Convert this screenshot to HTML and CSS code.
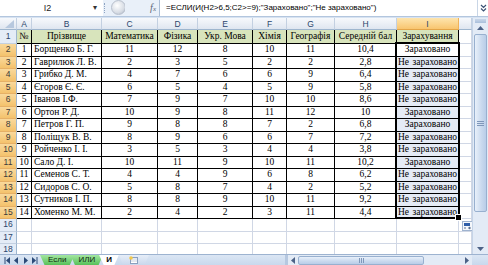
FILE: index.html
```html
<!DOCTYPE html>
<html>
    <head>
        <title>Зарахування</title>
        <meta charset="utf-8">
        <link rel="stylesheet" href="styles.css">
    </head>
    <body>
        <div class="formula_bar">
            <div class="name_box"><span class="name">I2</span><span class="drop">&#9662;</span></div>
            <div class="grip"></div>
            <div class="circle_box"><div class="circle"></div></div>
            <div class="fx"><i>f</i><span>x</span></div>
            <div class="formula">=ЕСЛИ(И(H2&gt;6,5;C2&gt;=9);"Зараховано";"Не зараховано")</div>
            <div class="expand">
                <svg width="7" height="8" viewBox="0 0 7 8"><path d="M1 1l2.5 2.5L6 1M1 4.5l2.5 2.5L6 4.5" fill="none" stroke="#3b5275" stroke-width="1.2"/></svg>
            </div>
        </div>

        <div class="workspace">
            <div class="sheet">
                <table class="grid">
                    <tr class="col_heads">
                        <th class="corner"><svg width="17" height="11" viewBox="0 0 17 11"><path d="M14 2v8H5z" fill="#b7c8de"/></svg></th>
                        <th class="ca">A</th>
                        <th class="cb">B</th>
                        <th class="cc">C</th>
                        <th class="cd">D</th>
                        <th class="ce">E</th>
                        <th class="cf">F</th>
                        <th class="cg">G</th>
                        <th class="ch">H</th>
                        <th class="ci sel">I</th>
                        <th class="cj"></th>
                    </tr>
                    <tr class="head">
                        <th class="rh">1</th>
                        <td>№</td><td>Прізвище</td><td>Математика</td><td>Фізика</td><td>Укр. Мова</td><td>Хімія</td><td>Географія</td><td>Середній бал</td><td>Зарахування</td>
                        <td class="e"></td>
                    </tr>
                    <tr class="data">
                        <th class="rh sel">2</th>
                        <td>1</td><td class="nm">Борщенко Б. Г.</td><td>11</td><td>12</td><td>8</td><td>10</td><td>11</td><td>10,4</td>
                        <td class="res active">Зараховано</td><td class="e"></td>
                    </tr>
                    <tr class="data">
                        <th class="rh sel">3</th>
                        <td>2</td><td class="nm">Гаврилюк Л. В.</td><td>2</td><td>3</td><td>5</td><td>2</td><td>2</td><td>2,8</td>
                        <td class="res"><span class="no"><span>Не</span><span>зараховано</span></span></td><td class="e"></td>
                    </tr>
                    <tr class="data">
                        <th class="rh sel">4</th>
                        <td>3</td><td class="nm">Грибко Д. М.</td><td>4</td><td>7</td><td>6</td><td>6</td><td>9</td><td>6,4</td>
                        <td class="res"><span class="no"><span>Не</span><span>зараховано</span></span></td><td class="e"></td>
                    </tr>
                    <tr class="data">
                        <th class="rh sel">5</th>
                        <td>4</td><td class="nm">Єгоров Є. Є.</td><td>6</td><td>5</td><td>4</td><td>5</td><td>9</td><td>5,8</td>
                        <td class="res"><span class="no"><span>Не</span><span>зараховано</span></span></td><td class="e"></td>
                    </tr>
                    <tr class="data">
                        <th class="rh sel">6</th>
                        <td>5</td><td class="nm">Іванов І.Ф.</td><td>7</td><td>9</td><td>7</td><td>10</td><td>10</td><td>8,6</td>
                        <td class="res"><span class="no"><span>Не</span><span>зараховано</span></span></td><td class="e"></td>
                    </tr>
                    <tr class="data">
                        <th class="rh sel">7</th>
                        <td>6</td><td class="nm">Ортон Р. Д.</td><td>10</td><td>9</td><td>8</td><td>11</td><td>12</td><td>10</td>
                        <td class="res">Зараховано</td><td class="e"></td>
                    </tr>
                    <tr class="data">
                        <th class="rh sel">8</th>
                        <td>7</td><td class="nm">Петров Г. П.</td><td>9</td><td>8</td><td>8</td><td>7</td><td>2</td><td>6,8</td>
                        <td class="res">Зараховано</td><td class="e"></td>
                    </tr>
                    <tr class="data">
                        <th class="rh sel">9</th>
                        <td>8</td><td class="nm">Поліщук В. В.</td><td>8</td><td>9</td><td>6</td><td>6</td><td>7</td><td>7,2</td>
                        <td class="res"><span class="no"><span>Не</span><span>зараховано</span></span></td><td class="e"></td>
                    </tr>
                    <tr class="data">
                        <th class="rh sel">10</th>
                        <td>9</td><td class="nm">Ройченко І. І.</td><td>3</td><td>5</td><td>3</td><td>4</td><td>4</td><td>3,8</td>
                        <td class="res"><span class="no"><span>Не</span><span>зараховано</span></span></td><td class="e"></td>
                    </tr>
                    <tr class="data">
                        <th class="rh sel">11</th>
                        <td>10</td><td class="nm">Сало Д. І.</td><td>10</td><td>11</td><td>9</td><td>10</td><td>11</td><td>10,2</td>
                        <td class="res">Зараховано</td><td class="e"></td>
                    </tr>
                    <tr class="data">
                        <th class="rh sel">12</th>
                        <td>11</td><td class="nm">Семенов С. Т.</td><td>4</td><td>4</td><td>9</td><td>6</td><td>8</td><td>6,2</td>
                        <td class="res"><span class="no"><span>Не</span><span>зараховано</span></span></td><td class="e"></td>
                    </tr>
                    <tr class="data">
                        <th class="rh sel">13</th>
                        <td>12</td><td class="nm">Сидоров С. О.</td><td>5</td><td>8</td><td>7</td><td>4</td><td>2</td><td>5,2</td>
                        <td class="res"><span class="no"><span>Не</span><span>зараховано</span></span></td><td class="e"></td>
                    </tr>
                    <tr class="data">
                        <th class="rh sel">14</th>
                        <td>13</td><td class="nm">Сутников І. П.</td><td>8</td><td>8</td><td>9</td><td>10</td><td>11</td><td>9,2</td>
                        <td class="res"><span class="no"><span>Не</span><span>зараховано</span></span></td><td class="e"></td>
                    </tr>
                    <tr class="data">
                        <th class="rh sel">15</th>
                        <td>14</td><td class="nm">Хоменко М. М.</td><td>2</td><td>4</td><td>2</td><td>3</td><td>11</td><td>4,4</td>
                        <td class="res"><span class="no"><span>Не</span><span>зараховано</span></span></td><td class="e"></td>
                    </tr>
                    <tr>
                        <th class="rh">16</th>
                        <td></td><td></td><td></td><td></td><td></td><td></td><td></td><td></td><td></td><td></td>
                    </tr>
                    <tr>
                        <th class="rh">17</th>
                        <td></td><td></td><td></td><td></td><td></td><td></td><td></td><td></td><td></td><td></td>
                    </tr>
                    <tr>
                        <th class="rh">18</th>
                        <td></td><td></td><td></td><td></td><td></td><td></td><td></td><td></td><td></td><td></td>
                    </tr>
                </table>

                <div class="selection"><div class="handle"></div></div>
                <div class="smart_tag">
                    <svg width="11" height="10" viewBox="0 0 11 10">
                        <rect x="0.5" y="0.5" width="10" height="9" fill="#f4f7fb" stroke="#9fb3cf"/>
                        <rect x="2" y="2" width="6" height="3" fill="#2f5ea8"/>
                        <path d="M2 7h2M6 7h3M7.5 5.8v2.4" stroke="#5a6f8f" stroke-width="1"/>
                    </svg>
                </div>
            </div>

            <div class="vscroll">
                <div class="split"></div>
                <div class="arrow">
                    <svg width="7" height="4" viewBox="0 0 7 4"><path d="M0 4L3.5 0 7 4z" fill="#4c6287"/></svg>
                </div>
                <div class="thumb"><div class="thumb_grip"></div></div>
                <div class="track"></div>
                <div class="arrow">
                    <svg width="7" height="4" viewBox="0 0 7 4"><path d="M0 0l3.5 4L7 0z" fill="#4c6287"/></svg>
                </div>
            </div>
        </div>

        <div class="tab_bar">
            <div class="nav">
                <svg width="36" height="7" viewBox="0 0 36 7">
                    <path d="M1 0v7" stroke="#2c4a78"/><path d="M6 0v7L2 3.5z" fill="#2c4a78"/>
                    <path d="M14 0v7L10 3.5z" fill="#2c4a78"/>
                    <path d="M20 0v7l4-3.5z" fill="#2c4a78"/>
                    <path d="M28 0v7l4-3.5z" fill="#2c4a78"/><path d="M33 0v7" stroke="#2c4a78"/>
                </svg>
            </div>
            <div class="tabs">
                <div class="tab green">Если</div>
                <div class="tab green">ИЛИ</div>
                <div class="tab current">И</div>
                <div class="tab new_sheet">
                    <svg width="12" height="8" viewBox="0 0 12 8"><rect x="2.5" y="1.5" width="7" height="6" fill="#fff" stroke="#8aa0bf"/><path d="M3 3h6M3 5h6" stroke="#c8d3e2"/><circle cx="3" cy="2" r="1.8" fill="#f2c94c"/></svg>
                </div>
            </div>
            <div class="tab_space"></div>
            <div class="hscroll">
                <div class="hsplit"></div>
                <div class="harrow">
                    <svg width="4" height="7" viewBox="0 0 4 7"><path d="M4 0v7L0 3.5z" fill="#4c6287"/></svg>
                </div>
                <div class="hthumb"><div class="hthumb_grip"></div></div>
                <div class="htrack"></div>
                <div class="harrow">
                    <svg width="4" height="7" viewBox="0 0 4 7"><path d="M0 0v7l4-3.5z" fill="#4c6287"/></svg>
                </div>
            </div>
            <div class="corner_box"></div>
        </div>
    </body>
</html>
```

FILE: styles.css
```css
body {
    margin: 0;
    width: 488px;
    height: 265px;
    overflow: hidden;
    background: #d7e3f2;
    font-family: "Liberation Sans", Arial, sans-serif;
}

/* formula bar */
.formula_bar {
    display: flex;
    height: 16px;
    background: #e9f0f9;
    border-bottom: 1px solid #b3c6de;
    margin-bottom: 1px;
}
.name_box {
    width: 103px;
    display: flex;
    background: #fff;
    font-size: 9px;
    line-height: 16px;
    color: #222;
}
.name {
    flex: 1;
    text-align: center;
    padding-left: 2px;
}
.drop {
    width: 10px;
    font-size: 8px;
    color: #333;
}
.grip {
    width: 3px;
    margin: 3px 1px;
    border-left: 1px dotted #8ea4c2;
}
.circle_box {
    width: 16px;
    overflow: hidden;
}
.circle {
    width: 15px;
    height: 15px;
    margin-left: 2px;
    border-radius: 50%;
    background: radial-gradient(circle at 40% 35%, #ffffff, #d8dde5 60%, #aab3c2);
    border: 1px solid #b7bfcc;
    box-sizing: border-box;
}
.fx {
    width: 34px;
    font-family: "Liberation Serif", serif;
    font-size: 10px;
    line-height: 16px;
    color: #5c6577;
    text-align: right;
    padding-right: 3px;
    box-sizing: border-box;
}
.fx span {
    font-size: 7px;
    font-style: italic;
}
.formula {
    flex: 1;
    background: #fff;
    border-left: 1px solid #a9bdd6;
    padding-left: 6px;
    font-size: 8px;
    line-height: 16px;
    color: #000;
    white-space: nowrap;
}
.expand {
    width: 10px;
    background: #fff;
    border-left: 1px solid #c9d6e6;
    display: flex;
    align-items: center;
    justify-content: center;
}

/* sheet */
.workspace {
    display: flex;
    height: 236px;
}
.sheet {
    width: 472px;
    position: relative;
    overflow: hidden;
    background: #fff;
}
.grid {
    border-collapse: separate;
    border-spacing: 0;
    table-layout: fixed;
    width: 472px;
    font-family: "Liberation Serif", "Times New Roman", serif;
    font-size: 9.5px;
}
th, td {
    box-sizing: border-box;
    padding: 0;
    height: 12.5px;
    line-height: 11px;
    white-space: nowrap;
    overflow: hidden;
    text-align: center;
    font-weight: normal;
    border-right: 1px solid #d0d7e5;
    border-bottom: 1px solid #d0d7e5;
}

.col_heads th {
    height: 11px;
    font-family: "Liberation Sans", Arial, sans-serif;
    font-size: 8.5px;
    line-height: 10px;
    color: #2b456b;
    background: linear-gradient(#f7f9fc, #dfe6f0);
    border-right-color: #c3d0e1;
    border-bottom-color: #9eb6ce;
}
.col_heads th.sel {
    background: linear-gradient(#fee5ae, #f8c56f);
    border-right-color: #f0b35a;
    border-bottom-color: #e3a548;
}
.corner svg {
    display: block;
}
.corner { width: 17px; }
.ca { width: 15px; }
.cb { width: 70px; }
.cc { width: 56px; }
.cd { width: 40px; }
.ce { width: 55px; }
.cf { width: 34px; }
.cg { width: 48px; }
.ch { width: 62px; }
.ci { width: 62px; }
.cj { width: 13px; }

.rh {
    font-family: "Liberation Sans", Arial, sans-serif;
    font-size: 8.5px;
    color: #2b456b;
    background: #e4ecf7;
    border-right-color: #9eb6ce;
    border-bottom-color: #c3d0e1;
}
.rh.sel {
    background: linear-gradient(#f9d99c, #f4c26c);
    color: #3a3a3a;
    border-bottom-color: #e6b066;
}

.head td {
    height: 14px;
    background: #d8e4bc;
    border-right-color: #000;
    border-bottom-color: #000;
}
.head th {
    height: 14px;
}
.data td {
    border-right-color: #000;
    border-bottom-color: #000;
}
.head td.e, .data td.e {
    background: #fff;
    border-right-color: #d0d7e5;
    border-bottom-color: #d0d7e5;
}
.nm {
    text-align: left;
    padding-left: 2px;
}
.res {
    background: #e5ebf5;
    padding: 0 1px;
}
.res.active {
    background: #fff;
}
.no {
    display: flex;
    justify-content: space-between;
}

.selection {
    position: absolute;
    left: 395px;
    top: 24px;
    width: 65px;
    height: 177px;
    border: 2px solid #000;
    box-sizing: border-box;
}
.handle {
    position: absolute;
    right: -4px;
    bottom: -4px;
    width: 5px;
    height: 5px;
    background: #000;
    border: 1px solid #fff;
}
.smart_tag {
    position: absolute;
    left: 462px;
    top: 203px;
    line-height: 0;
}

/* vertical scrollbar */
.vscroll {
    width: 16px;
    display: flex;
    flex-direction: column;
    background: #e3ebf6;
    border-left: 1px solid #c5d4e7;
    box-sizing: border-box;
}
.split {
    height: 4px;
    margin: 1px 2px 0;
    background: linear-gradient(#c9d7ea, #a9bfdb);
}
.arrow {
    height: 10px;
    display: flex;
    align-items: center;
    justify-content: center;
}
.thumb {
    height: 176px;
    margin: 1px 1px;
    border: 1px solid #98b0cf;
    border-radius: 2px;
    background: linear-gradient(to right, #e8f0fa, #c9d9ee 60%, #b9cde8);
    display: flex;
    align-items: center;
    justify-content: center;
}
.thumb_grip {
    width: 7px;
    height: 5px;
    background: repeating-linear-gradient(#7f97ba 0 1px, transparent 1px 2px);
}
.track {
    flex: 1;
}

/* sheet tabs */
.tab_bar {
    display: flex;
    height: 11px;
    background: linear-gradient(#dbe6f4, #c7d7ec);
    border-top: 1px solid #9db3d0;
}
.nav {
    width: 40px;
    padding-left: 4px;
    display: flex;
    align-items: center;
    box-sizing: border-box;
}
.tabs {
    display: flex;
}
.tab {
    height: 11px;
    padding: 0 8px;
    font-size: 8px;
    line-height: 10px;
    color: #0f2a10;
    clip-path: polygon(0 0, 100% 0, calc(100% - 5px) 100%, 5px 100%);
    margin-right: -4px;
}
.tab.green {
    background: linear-gradient(#a3e6a0, #4fbd52);
}
.tab.current {
    background: #fff;
    color: #000;
    font-weight: bold;
    padding: 0 7px;
}
.tab.new_sheet {
    background: linear-gradient(#e7eef8, #c3d3ea);
    padding: 1px 9px 0;
    margin-left: 4px;
}
.tab_space {
    flex: 1;
}
.hscroll {
    width: 187px;
    display: flex;
    background: #e3ebf6;
}
.hsplit {
    width: 3px;
    background: #b6c8e0;
}
.harrow {
    width: 10px;
    display: flex;
    align-items: center;
    justify-content: center;
}
.hthumb {
    width: 124px;
    margin: 1px 0;
    border: 1px solid #98b0cf;
    border-radius: 2px;
    background: linear-gradient(#e8f0fa, #c9d9ee 60%, #b9cde8);
    display: flex;
    align-items: center;
    justify-content: center;
}
.hthumb_grip {
    width: 5px;
    height: 5px;
    background: repeating-linear-gradient(to right, #7f97ba 0 1px, transparent 1px 2px);
}
.htrack {
    flex: 1;
}
.corner_box {
    width: 16px;
}
```
